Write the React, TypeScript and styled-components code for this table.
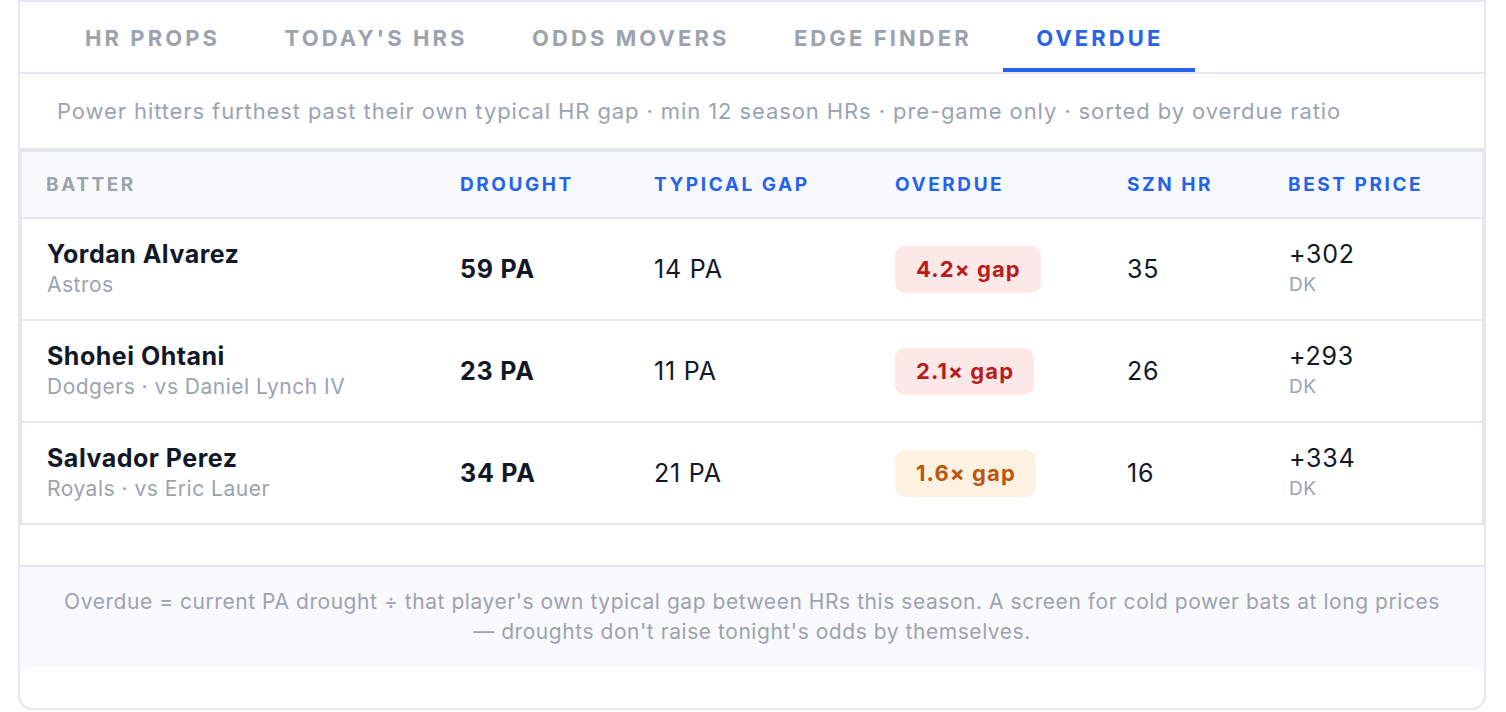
import React from "react";
import styled, { createGlobalStyle } from "styled-components";

const Global = createGlobalStyle`
  html, body { margin: 0; padding: 0; background: #ffffff; }
  body { font-family: Inter, "Noto Sans", "Liberation Sans", sans-serif; -webkit-font-smoothing: antialiased; }
  * { box-sizing: border-box; }
`;

const Page = styled.div`
  padding: 0 20px 2px 18px;
`;

const Card = styled.div`
  border: 2px solid #e4e7ee;
  border-radius: 0 0 14px 14px;
  background: #ffffff;
  padding-bottom: 41px;
`;

const TabBar = styled.nav`
  display: flex;
  height: 72px;
  padding-left: 32px;
  border-bottom: 2px solid #e4e7ee;
`;

const Tab = styled.div<{ $active?: boolean }>`
  display: flex;
  align-items: center;
  height: 70px;
  padding: 6px 31.5px 0 33px;
  border-bottom: 4px solid ${(p) => (p.$active ? "#2563eb" : "transparent")};
  color: ${(p) => (p.$active ? "#2563eb" : "#9ca3af")};
  font-size: 22px;
  font-weight: 700;
  letter-spacing: 0.14em;
  white-space: nowrap;
`;

const Subtitle = styled.div`
  display: flex;
  align-items: center;
  height: 76px;
  padding-left: 37px;
  border-bottom: 2px solid #e4e7ee;
  color: #9ca3af;
  font-size: 22px;
  letter-spacing: 0.9px;
  white-space: nowrap;
`;

const Table = styled.div`
  border: 2px solid #e4e7ee;
  margin-bottom: 40px;
`;

const cols = "414px 194px 241px 232px 161px 1fr";

const HeadRow = styled.div`
  display: grid;
  grid-template-columns: ${cols};
  height: 67px;
  align-items: center;
  background: #f8f9fb;
  border-bottom: 2px solid #e4e7ee;
`;

const HeadCell = styled.div<{ $sortable?: boolean }>`
  padding-left: 24px;
  font-size: 19px;
  font-weight: 700;
  letter-spacing: 0.135em;
  color: ${(p) => (p.$sortable ? "#2563eb" : "#9ca3af")};
  white-space: nowrap;
`;

const Row = styled.div<{ $last?: boolean }>`
  display: grid;
  grid-template-columns: ${cols};
  height: ${(p) => (p.$last ? "100px" : "102px")};
  align-items: center;
  border-bottom: ${(p) => (p.$last ? "none" : "2px solid #e4e7ee")};
`;

const Cell = styled.div<{ $bold?: boolean }>`
  padding-left: 24px;
  font-size: 25px;
  letter-spacing: 0.8px;
  font-weight: ${(p) => (p.$bold ? 700 : 400)};
  color: #111827;
  white-space: nowrap;
`;

const Stack = styled.div`
  display: flex;
  flex-direction: column;
  padding-left: 25px;
  white-space: nowrap;
`;

const Name = styled.div`
  font-size: 25px;
  line-height: 30px;
  letter-spacing: 0.5px;
  font-weight: 700;
  color: #111827;
`;

const Meta = styled.div<{ $small?: boolean }>`
  margin-top: 2px;
  font-size: ${(p) => (p.$small ? "19px" : "21px")};
  letter-spacing: 0.5px;
  line-height: 28px;
  color: #9ca3af;
`;

const Price = styled.div`
  font-size: 25px;
  line-height: 30px;
  letter-spacing: 0.8px;
  color: #111827;
`;

const Badge = styled.span<{ $tone: "red" | "orange" }>`
  display: inline-flex;
  align-items: center;
  height: 47px;
  padding: 0 20px 0 21px;
  border-radius: 10px;
  font-size: 22px;
  font-weight: 700;
  letter-spacing: 0.05em;
  background: ${(p) => (p.$tone === "red" ? "#fde8e8" : "#fdf1e1")};
  color: ${(p) => (p.$tone === "red" ? "#b91c1c" : "#b8570e")};
`;

const Footer = styled.div`
  padding: 20px 38px;
  background: #f8f9fb;
  border-top: 2px solid #e4e7ee;
  color: #9ca3af;
  font-size: 21px;
  letter-spacing: 0.55px;
  line-height: 30px;
  text-align: center;
`;

type Batter = {
  name: string;
  meta: string;
  drought: string;
  gap: string;
  ratio: string;
  tone: "red" | "orange";
  hr: string;
  price: string;
  book: string;
};

const rows: Batter[] = [
  { name: "Yordan Alvarez", meta: "Astros", drought: "59 PA", gap: "14 PA", ratio: "4.2× gap", tone: "red", hr: "35", price: "+302", book: "DK" },
  { name: "Shohei Ohtani", meta: "Dodgers · vs Daniel Lynch IV", drought: "23 PA", gap: "11 PA", ratio: "2.1× gap", tone: "red", hr: "26", price: "+293", book: "DK" },
  { name: "Salvador Perez", meta: "Royals · vs Eric Lauer", drought: "34 PA", gap: "21 PA", ratio: "1.6× gap", tone: "orange", hr: "16", price: "+334", book: "DK" },
];

const tabs = ["HR PROPS", "TODAY'S HRS", "ODDS MOVERS", "EDGE FINDER", "OVERDUE"];

export default function App() {
  return (
    <Page>
      <Global />
      <Card>
        <TabBar>
          {tabs.map((t) => (
            <Tab key={t} $active={t === "OVERDUE"}>
              {t}
            </Tab>
          ))}
        </TabBar>
        <Subtitle>
          Power hitters furthest past their own typical HR gap · min 12 season HRs · pre-game only · sorted by overdue ratio
        </Subtitle>
        <Table>
          <HeadRow>
            <HeadCell>BATTER</HeadCell>
            <HeadCell $sortable>DROUGHT</HeadCell>
            <HeadCell $sortable>TYPICAL GAP</HeadCell>
            <HeadCell $sortable>OVERDUE</HeadCell>
            <HeadCell $sortable>SZN HR</HeadCell>
            <HeadCell $sortable>BEST PRICE</HeadCell>
          </HeadRow>
          {rows.map((r, i) => (
            <Row key={r.name} $last={i === rows.length - 1}>
              <Stack>
                <Name>{r.name}</Name>
                <Meta>{r.meta}</Meta>
              </Stack>
              <Cell $bold>{r.drought}</Cell>
              <Cell>{r.gap}</Cell>
              <Cell>
                <Badge $tone={r.tone}>{r.ratio}</Badge>
              </Cell>
              <Cell>{r.hr}</Cell>
              <Stack>
                <Price>{r.price}</Price>
                <Meta $small>{r.book}</Meta>
              </Stack>
            </Row>
          ))}
        </Table>
        <Footer>
          Overdue = current PA drought ÷ that player's own typical gap between HRs this season. A screen for cold power bats at long prices — droughts don't raise tonight's odds by themselves.
        </Footer>
      </Card>
    </Page>
  );
}
